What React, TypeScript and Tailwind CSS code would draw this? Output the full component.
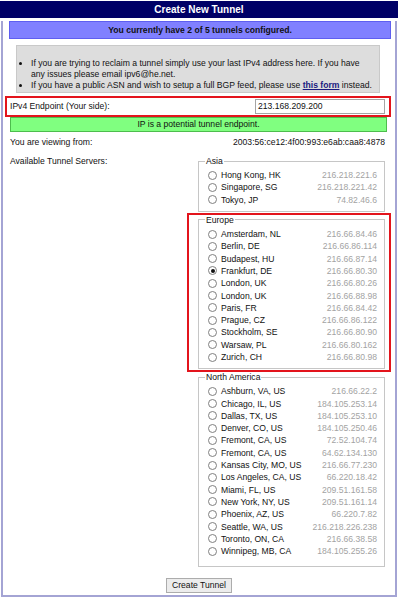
import React from "react";

type Server = { name: string; ip: string; checked?: boolean };

const asia: Server[] = [
  { name: "Hong Kong, HK", ip: "216.218.221.6" },
  { name: "Singapore, SG", ip: "216.218.221.42" },
  { name: "Tokyo, JP", ip: "74.82.46.6" },
];

const europe: Server[] = [
  { name: "Amsterdam, NL", ip: "216.66.84.46" },
  { name: "Berlin, DE", ip: "216.66.86.114" },
  { name: "Budapest, HU", ip: "216.66.87.14" },
  { name: "Frankfurt, DE", ip: "216.66.80.30", checked: true },
  { name: "London, UK", ip: "216.66.80.26" },
  { name: "London, UK", ip: "216.66.88.98" },
  { name: "Paris, FR", ip: "216.66.84.42" },
  { name: "Prague, CZ", ip: "216.66.86.122" },
  { name: "Stockholm, SE", ip: "216.66.80.90" },
  { name: "Warsaw, PL", ip: "216.66.80.162" },
  { name: "Zurich, CH", ip: "216.66.80.98" },
];

const northAmerica: Server[] = [
  { name: "Ashburn, VA, US", ip: "216.66.22.2" },
  { name: "Chicago, IL, US", ip: "184.105.253.14" },
  { name: "Dallas, TX, US", ip: "184.105.253.10" },
  { name: "Denver, CO, US", ip: "184.105.250.46" },
  { name: "Fremont, CA, US", ip: "72.52.104.74" },
  { name: "Fremont, CA, US", ip: "64.62.134.130" },
  { name: "Kansas City, MO, US", ip: "216.66.77.230" },
  { name: "Los Angeles, CA, US", ip: "66.220.18.42" },
  { name: "Miami, FL, US", ip: "209.51.161.58" },
  { name: "New York, NY, US", ip: "209.51.161.14" },
  { name: "Phoenix, AZ, US", ip: "66.220.7.82" },
  { name: "Seattle, WA, US", ip: "216.218.226.238" },
  { name: "Toronto, ON, CA", ip: "216.66.38.58" },
  { name: "Winnipeg, MB, CA", ip: "184.105.255.26" },
];

const Region = ({
  title,
  servers,
  bottom,
}: {
  title: string;
  servers: Server[];
  bottom: string;
}) => (
  <fieldset className={`border border-[#c6c6c6] pl-[9px] pr-[7px] pt-[3px] ${bottom}`}>
    <legend className="-ml-[3px] px-[1px] leading-[10px] text-[#111]">{title}</legend>
    {servers.map((s, i) => (
      <div key={i} className="flex h-[12.3px] items-center justify-between">
        <div className="flex items-center gap-[4px] text-[#111]">
          <span className="flex h-[9px] w-[9px] items-center justify-center rounded-full border border-[#808080] bg-white">
            {s.checked && <span className="h-[4px] w-[4px] rounded-full bg-[#111]" />}
          </span>
          <span className="leading-[10px]">{s.name}</span>
        </div>
        <span className="leading-[10px] text-[#a3a3a3]">{s.ip}</span>
      </div>
    ))}
  </fieldset>
);

export default function App() {
  return (
    <div className="w-[398px] bg-white font-['Liberation_Sans',Arial,sans-serif] text-[8.6px] text-[#111]">
      <div className="mt-[1px] flex h-[17px] items-center justify-center bg-[#000066] text-[10px] font-bold text-white">
        Create New Tunnel
      </div>

      <div className="ml-[1px] w-[396px] border-x-2 border-b-2 border-[#a4a4d4] pb-[2px]">
        <div className="ml-[6px] mt-[3px] flex h-[18px] w-[382px] items-center justify-center border border-[#5e5ef0] bg-[#8080ff] font-bold">
          You currently have 2 of 5 tunnels configured.
        </div>

        <div className="ml-[13px] mt-[6px] h-[48px] w-[364px] border border-[#c9c9c9] bg-[#dddddd] pl-[14px] pt-[12px]">
          <ul className="list-disc leading-[11px]">
            <li>
              If you are trying to reclaim a tunnel simply use your last IPv4 address here. If you have
              <br />
              any issues please email ipv6@he.net.
            </li>
            <li>
              If you have a public ASN and wish to setup a full BGP feed, please use{" "}
              <span className="font-bold text-[#1a1a80] underline">this form</span> instead.
            </li>
          </ul>
        </div>

        <div className="ml-[2px] mt-[3px] flex h-[21px] w-[386px] items-center justify-between border-2 border-[#e3141c] pl-[3px] pr-[4px]">
          <span>IPv4 Endpoint (Your side):</span>
          <div className="flex h-[15px] w-[130px] items-center border border-[#a5a5a5] bg-white pl-[2px]">
            213.168.209.200
          </div>
        </div>

        <div className="ml-[7px] flex h-[15px] w-[377px] items-center justify-center border border-[#4dbd4d] bg-[#80ff80]">
          IP is a potential tunnel endpoint.
        </div>

        <div className="ml-[7px] mr-[10px] mt-[5px] flex justify-between leading-[11px]">
          <span>You are viewing from:</span>
          <span>2003:56:ce12:4f00:993:e6ab:caa8:4878</span>
        </div>

        <div className="ml-[7px] mt-[8px] flex">
          <div className="w-[188px] leading-[10px]">Available Tunnel Servers:</div>
          <div className="flex w-[187px] flex-col">
            <Region title="Asia" servers={asia} bottom="pb-[5px]" />
            <div className="-ml-[11px] -mr-[6px] mt-[1px] border-2 border-[#e3141c] pb-[1px] pl-[9px] pr-[4px]">
              <Region title="Europe" servers={europe} bottom="pb-[5px]" />
            </div>
            <Region title="North America" servers={northAmerica} bottom="pb-[9px]" />
          </div>
        </div>

        <div className="mt-[11px] flex justify-center">
          <button className="flex h-[15px] w-[66px] items-center justify-center border border-[#acacac] bg-[#ececec] text-[8.6px] text-[#111]">
            Create Tunnel
          </button>
        </div>
      </div>
    </div>
  );
}
